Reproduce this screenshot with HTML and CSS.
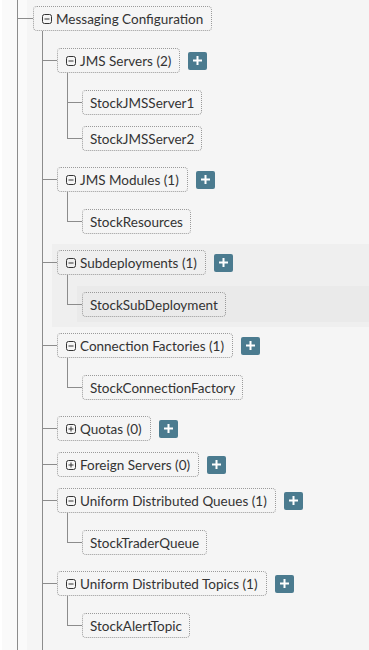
FILE: index.html
```html
<!DOCTYPE html>
<html lang="en">

<head>
    <meta charset="UTF-8">
    <meta name="viewport" content="width=device-width, initial-scale=1.0">
    <title>Messaging Configuration</title>
    <link rel="stylesheet" href="styles.css">
</head>

<body>
    <div class="tree">
        <ul class="root">
            <li class="open-end">
                <div class="node">
                    <div class="row">
                        <span class="label"><svg class="toggle" viewBox="0 0 10 10"><rect x=".5" y=".5" width="9" height="9" rx="2"/><path d="M2.5 5H7.5"/></svg>Messaging Configuration</span>
                    </div>
                    <ul>
                        <li>
                            <div class="node">
                                <div class="row">
                                    <span class="label"><svg class="toggle" viewBox="0 0 10 10"><rect x=".5" y=".5" width="9" height="9" rx="2"/><path d="M2.5 5H7.5"/></svg>JMS Servers (2)</span>
                                    <a href="javascript:;" class="add"><svg viewBox="0 0 9 9"><path d="M3.5 0h2v3.5H9v2H5.5V9h-2V5.5H0v-2h3.5z"/></svg></a>
                                </div>
                                <ul>
                                    <li>
                                        <div class="node">
                                            <div class="row"><span class="label leaf">StockJMSServer1</span></div>
                                        </div>
                                    </li>
                                    <li>
                                        <div class="node">
                                            <div class="row"><span class="label leaf">StockJMSServer2</span></div>
                                        </div>
                                    </li>
                                </ul>
                            </div>
                        </li>
                        <li>
                            <div class="node">
                                <div class="row">
                                    <span class="label"><svg class="toggle" viewBox="0 0 10 10"><rect x=".5" y=".5" width="9" height="9" rx="2"/><path d="M2.5 5H7.5"/></svg>JMS Modules (1)</span>
                                    <a href="javascript:;" class="add"><svg viewBox="0 0 9 9"><path d="M3.5 0h2v3.5H9v2H5.5V9h-2V5.5H0v-2h3.5z"/></svg></a>
                                </div>
                                <ul>
                                    <li>
                                        <div class="node">
                                            <div class="row"><span class="label leaf">StockResources</span></div>
                                        </div>
                                    </li>
                                </ul>
                            </div>
                        </li>
                        <li>
                            <!-- 鼠标悬停的那一行 -->
                            <div class="node hover">
                                <div class="row">
                                    <span class="label"><svg class="toggle" viewBox="0 0 10 10"><rect x=".5" y=".5" width="9" height="9" rx="2"/><path d="M2.5 5H7.5"/></svg>Subdeployments (1)</span>
                                    <a href="javascript:;" class="add"><svg viewBox="0 0 9 9"><path d="M3.5 0h2v3.5H9v2H5.5V9h-2V5.5H0v-2h3.5z"/></svg></a>
                                </div>
                                <ul>
                                    <li>
                                        <div class="node hover-child">
                                            <div class="row"><span class="label leaf">StockSubDeployment</span></div>
                                        </div>
                                    </li>
                                </ul>
                            </div>
                        </li>
                        <li>
                            <div class="node">
                                <div class="row">
                                    <span class="label"><svg class="toggle" viewBox="0 0 10 10"><rect x=".5" y=".5" width="9" height="9" rx="2"/><path d="M2.5 5H7.5"/></svg>Connection Factories (1)</span>
                                    <a href="javascript:;" class="add"><svg viewBox="0 0 9 9"><path d="M3.5 0h2v3.5H9v2H5.5V9h-2V5.5H0v-2h3.5z"/></svg></a>
                                </div>
                                <ul>
                                    <li>
                                        <div class="node">
                                            <div class="row"><span class="label leaf">StockConnectionFactory</span></div>
                                        </div>
                                    </li>
                                </ul>
                            </div>
                        </li>
                        <li>
                            <div class="node">
                                <div class="row">
                                    <span class="label"><svg class="toggle" viewBox="0 0 10 10"><rect x=".5" y=".5" width="9" height="9" rx="2"/><path d="M2.5 5H7.5M5 2.5V7.5"/></svg>Quotas (0)</span>
                                    <a href="javascript:;" class="add"><svg viewBox="0 0 9 9"><path d="M3.5 0h2v3.5H9v2H5.5V9h-2V5.5H0v-2h3.5z"/></svg></a>
                                </div>
                            </div>
                        </li>
                        <li>
                            <div class="node">
                                <div class="row">
                                    <span class="label"><svg class="toggle" viewBox="0 0 10 10"><rect x=".5" y=".5" width="9" height="9" rx="2"/><path d="M2.5 5H7.5M5 2.5V7.5"/></svg>Foreign Servers (0)</span>
                                    <a href="javascript:;" class="add"><svg viewBox="0 0 9 9"><path d="M3.5 0h2v3.5H9v2H5.5V9h-2V5.5H0v-2h3.5z"/></svg></a>
                                </div>
                            </div>
                        </li>
                        <li>
                            <div class="node">
                                <div class="row">
                                    <span class="label"><svg class="toggle" viewBox="0 0 10 10"><rect x=".5" y=".5" width="9" height="9" rx="2"/><path d="M2.5 5H7.5"/></svg>Uniform Distributed Queues (1)</span>
                                    <a href="javascript:;" class="add"><svg viewBox="0 0 9 9"><path d="M3.5 0h2v3.5H9v2H5.5V9h-2V5.5H0v-2h3.5z"/></svg></a>
                                </div>
                                <ul>
                                    <li>
                                        <div class="node">
                                            <div class="row"><span class="label leaf">StockTraderQueue</span></div>
                                        </div>
                                    </li>
                                </ul>
                            </div>
                        </li>
                        <li class="open-end">
                            <div class="node">
                                <div class="row">
                                    <span class="label"><svg class="toggle" viewBox="0 0 10 10"><rect x=".5" y=".5" width="9" height="9" rx="2"/><path d="M2.5 5H7.5"/></svg>Uniform Distributed Topics (1)</span>
                                    <a href="javascript:;" class="add"><svg viewBox="0 0 9 9"><path d="M3.5 0h2v3.5H9v2H5.5V9h-2V5.5H0v-2h3.5z"/></svg></a>
                                </div>
                                <ul>
                                    <li>
                                        <div class="node">
                                            <div class="row"><span class="label leaf">StockAlertTopic</span></div>
                                        </div>
                                    </li>
                                </ul>
                            </div>
                        </li>
                    </ul>
                </div>
            </li>
        </ul>
    </div>
</body>

</html>
```
FILE: styles.css
```css
* {
    padding: 0;
    margin: 0;
    box-sizing: border-box;
}

html,
body {
    height: 100%;
    overflow: hidden;
}

body {
    background: #fff;
    font-family: Lato, "Open Sans", sans-serif;
    font-size: 13.5px;
    color: #333;
}

a {
    text-decoration: none;
}

ul {
    list-style: none;
}

.tree {
    /* 左边那一条浅灰 */
    margin-left: 2px;
    min-height: 100%;
    padding-left: 15px;
    background: #fafafa;
}

.tree li {
    position: relative;
    padding-left: 10px;
}

/* 竖线 */
.tree li::before {
    content: "";
    position: absolute;
    left: 0;
    top: -11px;
    bottom: 0;
    border-left: 1px solid #8c8c8c;
    z-index: 1;
}

/* 最后一个子节点只画到横线 */
.tree li:last-child::before {
    bottom: auto;
    height: 30px;
}

.tree li.open-end::before {
    bottom: -40px;
    height: auto;
}

/* 横线 */
.tree li::after {
    content: "";
    position: absolute;
    left: 0;
    top: 18px;
    width: 15px;
    border-top: 1px solid #8c8c8c;
    z-index: 1;
}

.root > li::after {
    width: 16px;
}

.node {
    padding: 6px 0 5px 0;
}

.root > li > .node {
    background: #f5f5f5;
    min-height: 700px;
}

.node.hover {
    background: #efefef;
}

.node.hover-child {
    background: #eaeaea;
}

.row {
    display: flex;
    align-items: center;
    padding-left: 5px;
}

.root > li > .node > .row {
    padding-left: 6px;
}

.node ul {
    margin-top: 11px;
    padding-left: 15px;
}

.label {
    display: inline-flex;
    align-items: center;
    height: 25px;
    padding: 0 8px;
    border: 1px dotted #9a9a9a;
    border-radius: 4px;
    white-space: nowrap;
}

.label.leaf {
    padding: 0 7px;
}

.toggle {
    width: 10px;
    height: 10px;
    margin-right: 4px;
    fill: none;
    stroke: #333;
    stroke-width: 1;
}

.add {
    display: flex;
    align-items: center;
    justify-content: center;
    width: 19px;
    height: 18px;
    margin-left: 8px;
    border-radius: 2px;
    background: #4b7b8f;
}

.add svg {
    width: 9px;
    height: 9px;
    fill: #fff;
}
```
